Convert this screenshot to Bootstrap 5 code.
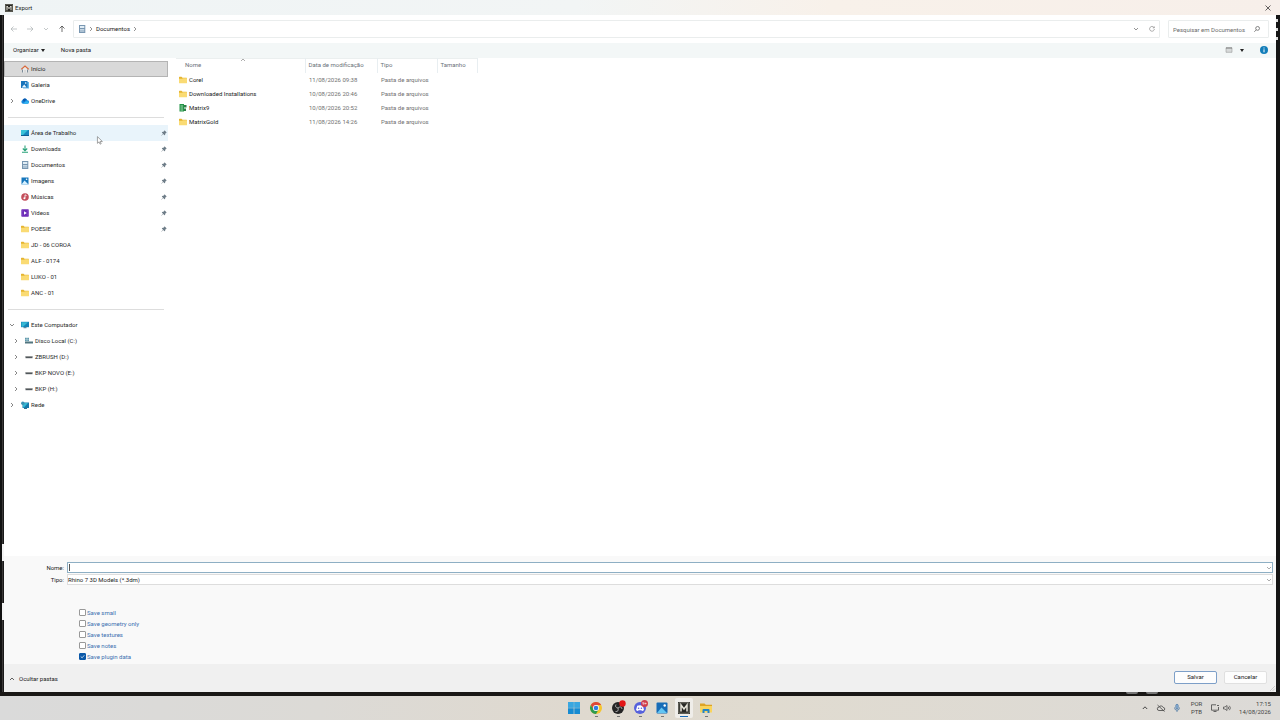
<!DOCTYPE html>
<html lang="pt-BR">
<head>
<meta charset="utf-8">
<meta name="viewport" content="width=device-width, initial-scale=1">
<title>Export</title>
<link href="https://cdn.jsdelivr.net/npm/bootstrap@5.3.0/dist/css/bootstrap.min.css" rel="stylesheet">
<style>
  body { font-family: Roboto, "Open Sans", sans-serif; font-size: 6px; line-height: 8px; color: #222; background: #171717; }
  svg { display: block; flex: none; overflow: visible; }
  button, input, select { font: inherit; color: inherit; }
  button { background: none; border: 0; padding: 0; }
  .ico { width: 8px; height: 8px; }
  .chev { width: 6px; height: 6px; fill: none; stroke: currentColor; stroke-width: .7; }
  .titlebar { height: 15px; padding: 0 9px 0 5px; gap: 2px; background: linear-gradient(90deg, #eff4f5 0%, #f2f5f5 45%, #f8f1ea 65%, #f7efea 100%); }
  .edge { width: 4px; }
  .edge-l { padding-bottom: 72px; background: linear-gradient(90deg, #111 0 2px, #3a3838 2px 3px, #191919 3px); }
  .edge-l i { width: 2px; height: 17px; background: #f4f4f4; }
  .edge-l i:first-child { margin-bottom: 42px; }
  .edge-r { background: #151515; }
  .edge-r i { width: 2px; height: 3px; margin-bottom: 6px; background: #ddd; }
  .address { height: 28px; padding: 0 7px 0 7px; }
  .arrows { width: 62px; gap: 10px; color: #aab0b2; }
  .arrows .up { color: #333; }
  .box { height: 18px; border: 1px solid #eaeded; border-radius: 1px; }
  .crumbs { gap: 2px; color: #666; }
  .crumbs a { color: #222; text-decoration: none; }
  .search { width: 101px; color: #555; }
  .search input { min-width: 0; border: 0; outline: 0; background: none; padding: 0; height: 10px; }
  .search input::placeholder { color: #6b6b6b; opacity: 1; }
  .tools { height: 15px; padding: 0 8px 1px 9px; background: #f3f7f7; }
  .tools .drop { width: 4px; height: 3px; fill: #222; }
  .tools .menu { gap: 2px; }
  .side { width: 164px; padding-top: 3px; }
  .side a { height: 16px; padding: 0 1px 0 17px; gap: 2px; color: #2a2a2a; text-decoration: none; position: relative; }
  .side a.deep { padding-left: 21px; }
  .side a.current { background: #d9d9d9; box-shadow: inset 0 0 0 1px #b4b4b4; }
  .side a.hover { background: #e9f4fb; }
  .side .twist { position: absolute; left: 5px; color: #555; }
  .side .deep .twist { left: 9px; }
  .side hr { margin: 8px 4px 7px; border-color: #777; }
  .pin { width: 6px; height: 6px; margin-left: auto; fill: #6e7d88; }
  .pointer { position: absolute; left: 93px; top: 11px; width: 6px; height: 9px; z-index: 2; }
  .files { margin-left: 8px; table-layout: fixed; width: 301px; border-top: 1px solid #ebefef; }
  .files th { height: 14px; font-weight: 400; color: #6b7178; padding: 0 3px 1px; border-right: 1px solid #e8eef1; position: relative; white-space: nowrap; }
  .files th:first-child { padding-left: 9px; }
  .files td { height: 14px; padding: 0 4px; color: #707070; white-space: nowrap; }
  .files td:first-child { padding-left: 3px; color: #222; }
  .files td span { gap: 2px; }
  .sort { position: absolute; left: 64px; top: -2px; color: #888; }
  .form { height: 108px; padding: 6px 3px 0 0; background: #f9f9f9; }
  .form .cap { width: 60px; text-align: right; }
  .pair { gap: 1px; }
  .field { height: 11px; margin-left: 3px; position: relative; }
  .field input, .field select { display: block; appearance: none; width: 100%; height: 100%; padding: 0; background: #fff; border: 1px solid #ddd; border-radius: 0; outline: 0; line-height: 8px; }
  .field input { border-color: #8eafc4; }
  .field .chev { position: absolute; right: 1px; top: 3px; color: #888; pointer-events: none; }
  .caret { position: absolute; left: 2px; top: 2px; width: 1px; height: 7px; background: #555; }
  .opts { margin: 22px 0 0 75px; }
  .opts label { height: 11px; color: #3b6fb0; gap: 1px; }
  .opts input { appearance: none; width: 7px; height: 7px; margin: 0; border: 1px solid #999; border-radius: 1px; background: #fff; }
  .opts input:checked { border-color: #0a58a8; background: #0a58a8 url("data:image/svg+xml,%3Csvg xmlns='http://www.w3.org/2000/svg' viewBox='0 0 7 7'%3E%3Cpath d='M1 3.500 3 5.300 6 1.800' fill='none' stroke='white'/%3E%3C/svg%3E") center/contain; }
  .foot { height: 28px; padding: 1px 9px 0 5px; background: #f0f0f0; position: relative; gap: 7px; }
  .foot .act { width: 43px; height: 13px; margin-bottom: 3px; background: #fdfdfd; border: 1px solid #e0e0e0; border-radius: 2px; }
  .foot .act.main { border-color: #7d9fc8; }
  .grip { position: absolute; right: 1px; bottom: 1px; width: 5px; height: 5px; stroke: #bbb; }
  .gap-strip { height: 4px; padding-right: 122px; gap: 8px; background: #191715; }
  .gap-strip i { width: 12px; height: 2px; background: #777; border-radius: 0 0 2px 2px; }
  .taskbar { height: 24px; position: relative; background: linear-gradient(90deg, #dadada 0%, #dcdad6 25%, #dfd9cf 45%, #e0dbd0 60%, #dcdad7 100%); }
  .apps { gap: 4px; }
  .apps button { width: 18px; height: 20px; position: relative; border-radius: 2px; }
  .apps button.on { background: #efede9; }
  .apps svg { width: 12px; height: 12px; margin: 0 auto; }
  .apps button[data-run]::after { content: ""; position: absolute; left: 8px; bottom: 1px; width: 3px; height: 1px; background: #777; }
  .apps button.on::after { left: 5px; width: 8px; background: #1769b5; }
  .tray { position: absolute; right: 9px; top: 0; height: 24px; color: #444; }
  .tray svg { width: 8px; height: 8px; fill: none; stroke: currentColor; }
  .lang { width: 15px; margin-right: 7px; }
  .clock { width: 40px; }
</style>
</head>
<body class="d-flex flex-column vh-100 overflow-hidden">
<svg width="0" height="0" class="position-absolute" aria-hidden="true">
  <symbol id="m" viewBox="0 0 12 12"><path fill="#272724" d="M0 0h12v12H0z"/><path fill="none" stroke="#aaa89b" stroke-width=".6" d="M.8.8h10.400v10.400H.8z"/><path fill="none" stroke="#e7e5da" stroke-width="1.500" d="M3 9.500V3l3 4 3-4v6.500"/></symbol>
  <symbol id="r" viewBox="0 0 6 6"><path d="m2 1 2 2-2 2"/></symbol>
  <symbol id="d" viewBox="0 0 6 6"><path d="m1 2 2 2 2-2"/></symbol>
  <symbol id="u" viewBox="0 0 6 6"><path d="m1 4 2-2 2 2"/></symbol>
  <symbol id="pin" viewBox="0 0 6 6"><path d="m3.500.3 2.200 2.200-.7.4-.8.8-.1 1.400-.7.100L2.200 4 .5 5.700.3 5.500 2 3.800.9 2.600l.1-.7 1.400-.1.800-.8z"/></symbol>
  <symbol id="folder" viewBox="0 0 8 8"><path fill="#e5b431" d="M0 1.300Q0 .8.500.8h2l1 .9h4q.5 0 .5.500V7H0z"/><path fill="#fadb74" d="M0 2.700h3.200l.8-.5h4v4.600q0 .5-.5.500h-7q-.5 0-.5-.5z"/></symbol>
  <symbol id="home" viewBox="0 0 8 8"><path fill="#e9e9e9" d="M1.200 3.500 4 1.200l2.800 2.300v4H5V5H3v2.500H1.200z"/><path fill="none" stroke="#d9683a" stroke-width="1.100" d="M.3 4.300 4 1l3.700 3.300"/><path fill="#7b8b98" d="M1 4.600h1v3H1zm5 0h1v3H6z"/></symbol>
  <symbol id="gal" viewBox="0 0 8 8"><path fill="#67b9ea" d="M2 1h6v6.500H2z"/><path fill="#1874bb" d="M0 0h6.500v7H0z"/><path fill="#e8f7ff" d="m.7 6.500 2.500-3 2.500 3z"/><circle cx="4.700" cy="2" r=".8" fill="#fff"/></symbol>
  <symbol id="cloud" viewBox="0 0 8 8"><path fill="#1688de" d="M2 6.800A2 2 0 0 1 1.600 3a2.500 2.500 0 0 1 4.700.2A1.800 1.800 0 0 1 6.200 6.800z"/><path fill="#0b59ad" d="M1.600 3a2.500 2.500 0 0 1 4-.8L3 5z"/><path fill="#32b4f1" d="m2 6.800 3-2.600 2.500.2q1 2-1.300 2.400z"/></symbol>
  <symbol id="desk" viewBox="0 0 8 8"><path fill="#1785bd" d="M0 1h8v6H0z"/><path fill="#37c2d8" d="M0 1h7L2 6H0z"/><path fill="#0b5d91" d="M0 6h8v1H0z"/></symbol>
  <symbol id="down" viewBox="0 0 8 8"><path fill="none" stroke="#28a27a" stroke-width="1.100" d="M4 .5v5M1.800 3.500 4 5.700l2.200-2.200M1 7.300h6"/></symbol>
  <symbol id="doc" viewBox="0 0 8 8"><path fill="#7896b1" d="M1 0h6.300v8H1z"/><path fill="#e1edf5" d="M2 1h4.300v2H2zM2 4h4.300v.8H2zm0 1.600h4.300v.8H2z"/></symbol>
  <symbol id="img" viewBox="0 0 8 8"><path fill="#1677bd" d="M.5.500h7v7h-7z"/><path fill="#d8f1ff" d="m.5 7.500 3-4 4 4z"/><circle cx="5.600" cy="2.300" r=".8" fill="#fff"/></symbol>
  <symbol id="mus" viewBox="0 0 8 8"><circle cx="4" cy="4" r="3.800" fill="#c44f5c"/><path fill="none" stroke="#fff" stroke-width=".8" d="M4 5.300V1.800l1.600.8"/><circle cx="3.400" cy="5.200" r="1" fill="#fff"/></symbol>
  <symbol id="vid" viewBox="0 0 8 8"><rect width="7.500" height="7.500" x=".3" y=".3" fill="#6c2bb7" rx=".8"/><path fill="#fff" d="m3 2.300 2.800 1.700L3 5.700z"/><path stroke="#c39be9" stroke-width=".5" stroke-dasharray=".7" d="M1 1v6m6-6v6"/></symbol>
  <symbol id="pc" viewBox="0 0 8 8"><path fill="#1382b6" d="M0 .8h8v5.400H0z"/><path fill="#36b8d4" d="M.5 1.200H7L2 5.800H.5z"/><path fill="#42718a" d="M2.500 6.200h3v1h-3z"/></symbol>
  <symbol id="disk" viewBox="0 0 8 8"><path fill="#51575b" d="M.5 3.200h7v2h-7z"/><path fill="#aaa" d="M.8 3h6.400v.6H.8z"/></symbol>
  <symbol id="sys" viewBox="0 0 8 8"><path fill="#51757f" d="M0 4.500h8v2H0z"/><path fill="#5f99ac" d="M0 .7h1.800v1.800H0zM2.200.7H4v1.800H2.200zM0 2.800h1.800v1.500H0zm2.200 0H4v1.500H2.200z"/></symbol>
  <symbol id="net" viewBox="0 0 8 8"><path fill="#1679ac" d="M1.500 1.500H8V7H1.500z"/><path fill="#36b9d2" d="M2 2h5L3 6.500H2z"/><circle cx="1.800" cy="2.200" r="1.700" fill="#3992b5"/><path fill="#31718c" d="M3 7h3v1H3z"/></symbol>
  <symbol id="mx" viewBox="0 0 8 8"><path fill="#239447" d="M.5 0h4.500v7.500H.5z"/><path fill="#2f7f48" d="M5 1h2.500v2.500H5zM5 4.500h2V7H5z"/><path fill="none" stroke="#d8f0de" stroke-width=".7" d="M1.500 2H4M1.500 4H4M1.500 6H4"/></symbol>
</svg>

<header class="titlebar d-flex align-items-center">
  <svg class="ico"><use href="#m"/></svg><span class="me-auto">Export</span>
  <button aria-label="Fechar"><svg class="chev" viewBox="0 0 6 6"><path d="m.5.5 5 5m0-5-5 5" stroke="#222"/></svg></button>
</header>

<div class="d-flex flex-grow-1">
  <div class="edge edge-l d-flex flex-column justify-content-end align-items-end"><i></i><i></i></div>
  <main class="bg-white flex-grow-1 d-flex flex-column">
    <div class="address d-flex align-items-center">
      <div class="arrows d-flex align-items-center">
        <button aria-label="Voltar"><svg class="chev" viewBox="1 1 6 6"><path d="M7 4H1M3.500 1.500 1 4l2.500 2.500"/></svg></button>
        <button aria-label="Avançar"><svg class="chev" viewBox="1 1 6 6"><path d="M1 4h6M4.500 1.500 7 4 4.500 6.500"/></svg></button>
        <button aria-label="Recentes"><svg class="chev"><use href="#d"/></svg></button>
        <button class="up" aria-label="Acima"><svg class="chev" viewBox="1 1 6 6"><path d="M4 7V1M1.500 3.500 4 1l2.500 2.500"/></svg></button>
      </div>
      <div class="box crumbs d-flex align-items-center flex-grow-1 px-1">
        <svg class="ico"><use href="#doc"/></svg><svg class="chev"><use href="#r"/></svg><a href="#">Documentos</a><svg class="chev me-auto"><use href="#r"/></svg>
        <button class="me-2" aria-label="Locais"><svg class="chev"><use href="#d"/></svg></button>
        <button aria-label="Atualizar"><svg class="ico chev" viewBox="0 0 8 8"><path d="M6.800 2.200A3.200 3.200 0 1 0 7.200 4M7 .5v2H5"/></svg></button>
      </div>
      <div class="box search d-flex align-items-center ms-2 px-1">
        <input class="flex-grow-1" type="text" aria-label="Pesquisar" placeholder="Pesquisar em Documentos">
        <svg class="chev me-1" viewBox="0 0 6 6"><circle cx="3.600" cy="2.400" r="1.900"/><path d="M2.300 3.800.3 5.800"/></svg>
      </div>
    </div>
    <div class="tools d-flex align-items-center">
      <button class="menu d-flex align-items-center">Organizar<svg class="drop" viewBox="0 0 4 3"><path d="M0 0h4L2 3z"/></svg></button><button class="ms-3">Nova pasta</button>
      <button class="ms-auto me-1" aria-label="Exibição"><svg class="chev" viewBox="0 0 6 6"><path fill="#d7dada" stroke="#888" stroke-width=".5" d="M0 .8h6v4.500H0z"/><path stroke="#666" d="M0 1h6"/></svg></button>
      <button class="me-3 ms-1" aria-label="Mais opções"><svg class="drop" viewBox="0 0 4 3"><path d="M0 0h4L2 3z"/></svg></button>
      <button aria-label="Ajuda"><svg class="ico" viewBox="0 0 8 8"><circle cx="4" cy="4" r="4" fill="#127db9"/><path stroke="#fff" d="M4 1.500v1M4 3.300v3"/></svg></button>
    </div>
    <div class="d-flex flex-grow-1">
      <nav class="side">
        <a href="#" class="current d-flex align-items-center"><svg class="ico"><use href="#home"/></svg>Início</a>
        <a href="#" class="d-flex align-items-center"><svg class="ico"><use href="#gal"/></svg>Galeria</a>
        <a href="#" class="d-flex align-items-center"><svg class="chev twist"><use href="#r"/></svg><svg class="ico"><use href="#cloud"/></svg>OneDrive</a>
        <hr>
        <a href="#" class="hover d-flex align-items-center"><svg class="ico"><use href="#desk"/></svg>Área de Trabalho<svg class="pin"><use href="#pin"/></svg><svg class="pointer" viewBox="0 0 7 10"><path fill="#fff" stroke="#666" stroke-width=".7" d="M.5.500v7.800l1.900-1.700 1.200 2.700 1.300-.6-1.200-2.500h2.600z"/></svg></a>
        <a href="#" class="d-flex align-items-center"><svg class="ico"><use href="#down"/></svg>Downloads<svg class="pin"><use href="#pin"/></svg></a>
        <a href="#" class="d-flex align-items-center"><svg class="ico"><use href="#doc"/></svg>Documentos<svg class="pin"><use href="#pin"/></svg></a>
        <a href="#" class="d-flex align-items-center"><svg class="ico"><use href="#img"/></svg>Imagens<svg class="pin"><use href="#pin"/></svg></a>
        <a href="#" class="d-flex align-items-center"><svg class="ico"><use href="#mus"/></svg>Músicas<svg class="pin"><use href="#pin"/></svg></a>
        <a href="#" class="d-flex align-items-center"><svg class="ico"><use href="#vid"/></svg>Vídeos<svg class="pin"><use href="#pin"/></svg></a>
        <a href="#" class="d-flex align-items-center"><svg class="ico"><use href="#folder"/></svg>POESIE<svg class="pin"><use href="#pin"/></svg></a>
        <a href="#" class="d-flex align-items-center"><svg class="ico"><use href="#folder"/></svg>JD - 06 COROA</a>
        <a href="#" class="d-flex align-items-center"><svg class="ico"><use href="#folder"/></svg>ALF - 0174</a>
        <a href="#" class="d-flex align-items-center"><svg class="ico"><use href="#folder"/></svg>LUKO - 01</a>
        <a href="#" class="d-flex align-items-center"><svg class="ico"><use href="#folder"/></svg>ANC - 01</a>
        <hr>
        <a href="#" class="d-flex align-items-center"><svg class="chev twist"><use href="#d"/></svg><svg class="ico"><use href="#pc"/></svg>Este Computador</a>
        <a href="#" class="deep d-flex align-items-center"><svg class="chev twist"><use href="#r"/></svg><svg class="ico"><use href="#sys"/></svg>Disco Local (C:)</a>
        <a href="#" class="deep d-flex align-items-center"><svg class="chev twist"><use href="#r"/></svg><svg class="ico"><use href="#disk"/></svg>ZBRUSH (D:)</a>
        <a href="#" class="deep d-flex align-items-center"><svg class="chev twist"><use href="#r"/></svg><svg class="ico"><use href="#disk"/></svg>BKP NOVO (E:)</a>
        <a href="#" class="deep d-flex align-items-center"><svg class="chev twist"><use href="#r"/></svg><svg class="ico"><use href="#disk"/></svg>BKP (H:)</a>
        <a href="#" class="d-flex align-items-center"><svg class="chev twist"><use href="#r"/></svg><svg class="ico"><use href="#net"/></svg>Rede</a>
      </nav>
      <div>
        <table class="files">
          <colgroup><col style="width:129px"><col style="width:72px"><col style="width:60px"><col style="width:40px"></colgroup>
          <thead><tr><th>Nome<svg class="chev sort"><use href="#u"/></svg></th><th>Data de modificação</th><th>Tipo</th><th>Tamanho</th></tr></thead>
          <tbody>
            <tr><td><span class="d-flex align-items-center"><svg class="ico"><use href="#folder"/></svg>Corel</span></td><td>11/08/2026 09:38</td><td>Pasta de arquivos</td><td></td></tr>
            <tr><td><span class="d-flex align-items-center"><svg class="ico"><use href="#folder"/></svg>Downloaded Installations</span></td><td>10/08/2026 20:46</td><td>Pasta de arquivos</td><td></td></tr>
            <tr><td><span class="d-flex align-items-center"><svg class="ico"><use href="#mx"/></svg>Matrix9</span></td><td>10/08/2026 20:52</td><td>Pasta de arquivos</td><td></td></tr>
            <tr><td><span class="d-flex align-items-center"><svg class="ico"><use href="#folder"/></svg>MatrixGold</span></td><td>11/08/2026 14:26</td><td>Pasta de arquivos</td><td></td></tr>
          </tbody>
        </table>
      </div>
    </div>
    <form class="form d-flex flex-column">
      <div class="pair d-flex flex-column">
        <div class="d-flex align-items-center"><label class="cap" for="fn">Nome:</label><div class="field flex-grow-1"><input id="fn" type="text"><span class="caret"></span><svg class="chev"><use href="#d"/></svg></div></div>
        <div class="d-flex align-items-center"><label class="cap" for="ft">Tipo:</label><div class="field flex-grow-1"><select id="ft"><option>Rhino 7 3D Models (*.3dm)</option></select><svg class="chev"><use href="#d"/></svg></div></div>
      </div>
      <div class="opts d-flex flex-column align-items-start">
        <label class="d-flex align-items-center"><input type="checkbox">Save small</label>
        <label class="d-flex align-items-center"><input type="checkbox">Save geometry only</label>
        <label class="d-flex align-items-center"><input type="checkbox">Save textures</label>
        <label class="d-flex align-items-center"><input type="checkbox">Save notes</label>
        <label class="d-flex align-items-center"><input type="checkbox" checked>Save plugin data</label>
      </div>
    </form>
    <div class="foot d-flex align-items-center">
      <button class="d-flex align-items-center me-auto gap-1"><svg class="chev"><use href="#u"/></svg>Ocultar pastas</button>
      <button class="act main">Salvar</button><button class="act">Cancelar</button>
      <svg class="grip" viewBox="0 0 5 5"><path d="M0 5 5 0M2.500 5 5 2.500" stroke-width=".7"/></svg>
    </div>
  </main>
  <div class="edge edge-r d-flex flex-column align-items-start pt-1"><i></i><i></i><i></i></div>
</div>
<div class="gap-strip d-flex justify-content-end"><i></i><i></i></div>
<footer class="taskbar d-flex justify-content-center align-items-center">
  <div class="apps d-flex">
    <button aria-label="Iniciar"><svg viewBox="0 0 12 12"><path fill="#168bd2" d="M0 0h5.700v5.700H0zM6.300 0H12v5.700H6.300zM0 6.300h5.700V12H0zM6.300 6.300H12V12H6.300z"/><path fill="#5dc4ee" opacity=".5" d="M0 0h5.700v5.700H0zM6.300 0H12v5.700H6.300z"/></svg></button>
    <button data-run aria-label="Chrome"><svg viewBox="0 0 12 12"><circle cx="6" cy="6" r="6" fill="#f5c52c"/><path fill="#df4637" d="M.8 3A6 6 0 0 1 11.200 3H6L3.400 7.500z"/><path fill="#2b9b50" d="M.8 3 3.400 7.500 6 9l2.600-1.500L6 12A6 6 0 0 1 .8 3z"/><circle cx="6" cy="6" r="3" fill="#fff"/><circle cx="6" cy="6" r="2.300" fill="#327de0"/></svg></button>
    <button data-run aria-label="OBS Studio"><svg viewBox="0 0 12 12"><circle cx="6" cy="6" r="6" fill="#252525"/><path fill="none" stroke="#c4c4c4" stroke-width=".8" d="M6 6Q2.500 5.500 4 2.500M6 6q3.500-2.500 4 1M6 6q1 4-2.500 3.500"/><circle cx="10.500" cy="1.500" r="3.200" fill="#e31616"/></svg></button>
    <button data-run aria-label="Discord"><svg viewBox="0 0 12 12"><circle cx="6" cy="6" r="6" fill="#5661dc"/><path fill="#fff" d="M3.200 3.800Q6 2.700 8.800 3.800L10 8q-1 1-2 1l-.6-.8H4.600L4 9Q3 9 2 8z"/><circle cx="4.600" cy="6.200" r=".8" fill="#5661dc"/><circle cx="7.400" cy="6.200" r=".8" fill="#5661dc"/><circle cx="10.500" cy="1.500" r="3.500" fill="#cf3d4c"/><text x="8.300" y="3" font-size="4" fill="#fff">9+</text></svg></button>
    <button data-run aria-label="Fotos"><svg viewBox="0 0 12 12"><rect width="11" height="11" x=".5" y=".5" fill="#176cb7" rx="1"/><path fill="#63c5f2" d="m1 11 4.500-5.500L11 11z"/><circle cx="8.700" cy="3.500" r="1.200" fill="#fff"/></svg></button>
    <button data-run class="on" aria-label="MatrixGold"><svg><use href="#m"/></svg></button>
    <button data-run aria-label="Explorador"><svg viewBox="0 0 12 12"><path fill="#dda323" d="M0 1.500h4.500l1.300 1.300H12V10H0z"/><path fill="#f9d45c" d="M0 4h12v6.500H0z"/><path fill="#2484c7" d="M2.500 8Q2.500 7 3.500 7h5q1 0 1 1v3h-2V9h-3v2h-2z"/></svg></button>
  </div>
  <div class="tray d-flex align-items-center">
    <svg class="me-2" viewBox="0 0 8 8"><path d="m1.800 5 2.200-2.200L6.200 5"/></svg>
    <svg class="me-2" viewBox="0 0 8 8"><path d="M2 6.500a1.700 1.700 0 0 1 0-3.400 2.300 2.300 0 0 1 4.200.4A1.500 1.500 0 0 1 6.300 6.500zM.5 1l7 6.500" stroke-width=".8"/></svg>
    <svg class="me-2" viewBox="0 0 8 8"><rect width="2.400" height="4.500" x="2.800" y=".3" rx="1.200" fill="#8db0d2" stroke="#386a9d" stroke-width=".6"/><path d="M1.500 3.500q0 2.700 2.500 2.700t2.500-2.700M4 6.200V8" stroke="#386a9d" stroke-width=".7"/></svg>
    <span class="lang text-center">POR<br>PTB</span>
    <svg class="me-1" viewBox="0 0 8 8"><path d="M5 .8H.5v5.400h7V3M2.500 7.500h3M6 1.500h2" stroke-width=".8"/></svg>
    <svg viewBox="0 0 8 8"><path d="M.5 3v2h1.400L4 6.500v-5L1.900 3zM5.200 2.800q1 1.200 0 2.400M6.400 1.800q2 2.200 0 4.400" stroke-width=".7"/></svg>
    <span class="clock text-end">17:15<br>14/08/2026</span>
  </div>
</footer>
<script src="https://cdn.jsdelivr.net/npm/bootstrap@5.3.0/dist/js/bootstrap.bundle.min.js"></script>
</body>
</html>
